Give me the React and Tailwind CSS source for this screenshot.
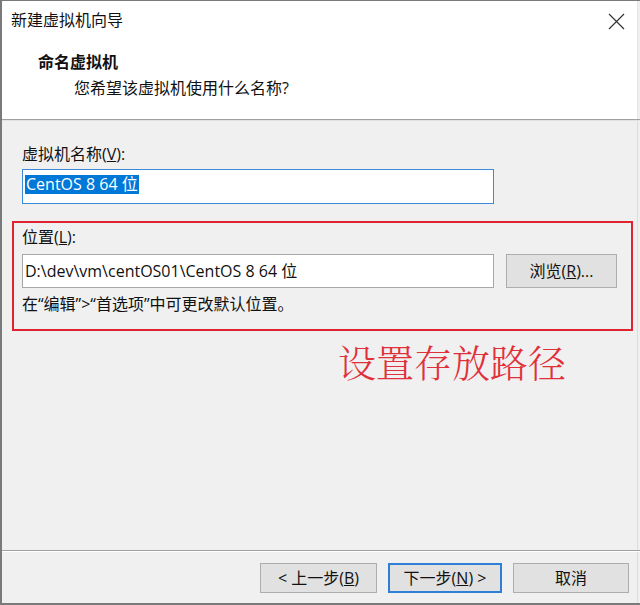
const ui = { fontFamily: '"Open Sans", "Noto Sans CJK SC", sans-serif' }

function Btn({ children, primary, className = '' }) {
  return (
    <div
      className={`flex items-center justify-center h-[30px] text-[16px] text-[#111] bg-[#e1e1e1] border ${
        primary ? 'border-[#2f7fd6] shadow-[inset_0_0_0_1px_#2f7fd6]' : 'border-[#adadad]'
      } ${className}`}
    >
      {children}
    </div>
  )
}

export default function App() {
  return (
    <div
      style={ui}
      className="w-[640px] h-[605px] flex flex-col bg-[#f0f0f0] border-l-2 border-t border-b-2 border-[#7a7a7a] overflow-hidden"
    >
      {/* header */}
      <div className="h-[118px] bg-white relative border-r border-[#e6e6e6] mr-[2px]">
        <div className="pl-[9px] pt-[8px] text-[16px] text-[#111] leading-[22px]">新建虚拟机向导</div>
        <div className="absolute right-[12px] top-[12px]">
          <svg width="17" height="17" viewBox="0 0 17 17">
            <path d="M1 1L16 16M16 1L1 16" stroke="#333" strokeWidth="1.2" />
          </svg>
        </div>
        <div className="pl-[36px] pt-[20px] text-[16px] font-bold text-[#111] leading-[22px]">命名虚拟机</div>
        <div className="pl-[72px] pt-[4px] text-[16px] text-[#111] leading-[22px]">您希望该虚拟机使用什么名称?</div>
      </div>
      <div className="h-[2px] border-t border-[#a0a0a0] bg-[#e3e3e3]" />

      {/* body */}
      <div className="flex-1 flex flex-col pr-[5px] border-r border-[#dcdcdc] mr-[2px]">
        <div className="pl-[20px] pt-[22px] text-[16px] text-[#111] leading-[22px]">
          虚拟机名称(<span className="underline">V</span>):
        </div>
        <div className="ml-[20px] mt-[4px] w-[472px] h-[35px] bg-white border border-[#3c8ad8] pl-[2px] pt-[2px]">
          <span className="inline-block bg-[#0078d7] text-white text-[16px] leading-[19px] px-[1px]">CentOS 8 64 位</span>
        </div>

        <div className="ml-[10px] mt-[17px] w-[621px] h-[110px] border-2 border-[#e0232e] pl-[8px] pt-[3px]">
          <div className="text-[16px] text-[#111] leading-[22px]">
            位置(<span className="underline">L</span>):
          </div>
          <div className="flex items-center gap-[12px] mt-[6px]">
            <div className="w-[472px] h-[34px] bg-white border border-[#a7a7a7] flex items-center pl-[2px] text-[16px] text-[#111]">
              D:\dev\vm\centOS01\CentOS 8 64 位
            </div>
            <Btn className="w-[111px] h-[34px]">
              浏览(<span className="underline">R</span>)...
            </Btn>
          </div>
          <div className="mt-[5px] text-[16px] text-[#111] leading-[22px]">在“编辑”&gt;“首选项”中可更改默认位置。</div>
        </div>

        <div
          className="ml-[336px] mt-[6px] text-[38px] leading-[48px] text-[#e0303a] font-light"
          style={{ fontFamily: '"Noto Serif CJK SC", "Noto Sans CJK SC", serif' }}
        >
          设置存放路径
        </div>
      </div>

      <div className="h-[2px] border-t border-[#a0a0a0] bg-white" />
      <div className="h-[51px] flex items-start pt-[11px] pl-[258px] gap-[11px] border-r border-[#dcdcdc] mr-[2px]">
        <Btn className="w-[117px]">
          &lt; 上一步(<span className="underline">B</span>)
        </Btn>
        <Btn primary className="w-[114px]">
          下一步(<span className="underline">N</span>) &gt;
        </Btn>
        <Btn className="w-[116px]">取消</Btn>
      </div>
    </div>
  )
}
